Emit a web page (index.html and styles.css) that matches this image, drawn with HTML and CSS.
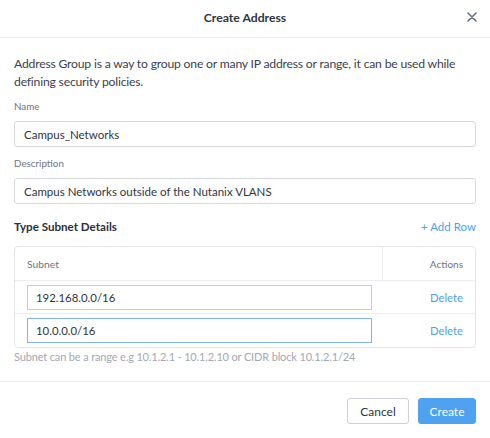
FILE: index.html
```html
<!DOCTYPE html>
<html>
<head>
<meta charset="utf-8">
<link rel="stylesheet" href="styles.css">
</head>
<body>
<div class="dialog">
  <div class="header">
    <div class="title">Create Address</div>
    <svg class="close" width="10" height="10" viewBox="0 0 10 10"><path d="M1 1L9 9M9 1L1 9" stroke="#5b6a80" stroke-width="1.5" stroke-linecap="round"/></svg>
  </div>
  <div class="body">
    <p class="intro">Address Group is a way to group one or many IP address or range, it can be used while defining security policies.</p>
    <div class="field">
      <div class="label">Name</div>
      <div class="input">Campus_Networks</div>
    </div>
    <div class="field">
      <div class="label">Description</div>
      <div class="input">Campus Networks outside of the Nutanix VLANS</div>
    </div>
    <div class="section-head">
      <div class="section-title">Type Subnet Details</div>
      <div class="link">+ Add Row</div>
    </div>
    <div class="table">
      <div class="row head-row">
        <div class="cell c-subnet">Subnet</div>
        <div class="cell c-actions">Actions</div>
      </div>
      <div class="row">
        <div class="cell c-subnet"><div class="cinput">192.168.0.0/16</div></div>
        <div class="cell c-actions link">Delete</div>
      </div>
      <div class="row">
        <div class="cell c-subnet"><div class="cinput focus">10.0.0.0/16</div></div>
        <div class="cell c-actions link">Delete</div>
      </div>
    </div>
    <div class="hint">Subnet can be a range e.g 10.1.2.1 - 10.1.2.10 or CIDR block 10.1.2.1/24</div>
  </div>
  <div class="footer">
    <div class="btn">Cancel</div>
    <div class="btn primary">Create</div>
  </div>
</div>
</body>
</html>
```
FILE: styles.css
```css
* { box-sizing: border-box; }
body {
  margin: 0;
  background: #fff;
  font-family: "Lato", "Open Sans", sans-serif;
  color: #3b4150;
  font-size: 13px;
}
.dialog { width: 490px; height: 438px; display: flex; flex-direction: column; }
.header {
  height: 38px;
  flex: none;
  border-bottom: 1px solid #eceef2;
  display: flex;
  align-items: center;
  justify-content: center;
  padding-bottom: 2px;
  position: relative;
}
.title { font-size: 12.2px; font-weight: 700; color: #2f3542; }
.close { position: absolute; right: 13px; top: 12px; }
.body { padding: 17px 14px 0 14px; flex: 1; }
.intro { margin: 0; line-height: 18px; font-size: 12.2px; letter-spacing: -0.2px; color: #3b4150; }
.field { margin-top: 9px; }
.field + .field { margin-top: 10px; }
.label { font-size: 9.8px; color: #6c7482; line-height: 12px; margin-bottom: 9px; }
.input {
  height: 26px;
  border: 1px solid #d6d9de;
  border-radius: 3px;
  padding: 0 9px;
  display: flex;
  align-items: center;
  font-size: 11.5px;
  color: #2f3542;
}
.section-head {
  margin-top: 14px;
  display: flex;
  justify-content: space-between;
  align-items: center;
  height: 16px;
}
.section-title { font-weight: 700; font-size: 11.6px; color: #2a303c; }
.link { color: #4c9ff0; font-size: 11.5px; }
.table {
  margin-top: 12px;
  border: 1px solid #e3e5e9;
  border-radius: 4px;
}
.row { display: flex; height: 33px; border-top: 1px solid #eceef1; }
.row.head-row { border-top: none; height: 33px; }
.row:last-child { height: 34px; }
.cell { display: flex; align-items: center; }
.c-subnet { flex: 1; padding-left: 12px; }
.head-row .c-subnet { border-right: 1px solid #eceef1; font-size: 10.3px; color: #6c7482; }
.c-actions { width: 92px; justify-content: flex-end; padding-right: 12px; }
.head-row .c-actions { font-size: 10px; color: #6c7482; }
.c-actions.link { font-size: 11.3px; }
.cinput {
  width: 345px;
  height: 25px;
  border: 1px solid #c9ccd1;
  padding: 0 8px;
  display: flex;
  align-items: center;
  font-size: 11.4px;
  color: #2f3542;
}
.cinput.focus { border-color: #7fb3ee; }
.hint { margin-top: 2px; font-size: 11px; letter-spacing: -0.15px; color: #a3a8b1; line-height: 14px; }
.footer {
  height: 57px;
  flex: none;
  border-top: 1px solid #eceef2;
  display: flex;
  justify-content: flex-end;
  align-items: flex-start;
  padding: 16px 14px 0 0;
  gap: 9px;
}
.btn {
  height: 26px;
  width: 62px;
  border: 1px solid #cdd0d6;
  border-radius: 3px;
  display: flex;
  align-items: center;
  justify-content: center;
  font-size: 12px;
  color: #2f3542;
}
.btn.primary { background: #4ea2f0; border-color: #4ea2f0; color: #fff; width: 58px; }
```
